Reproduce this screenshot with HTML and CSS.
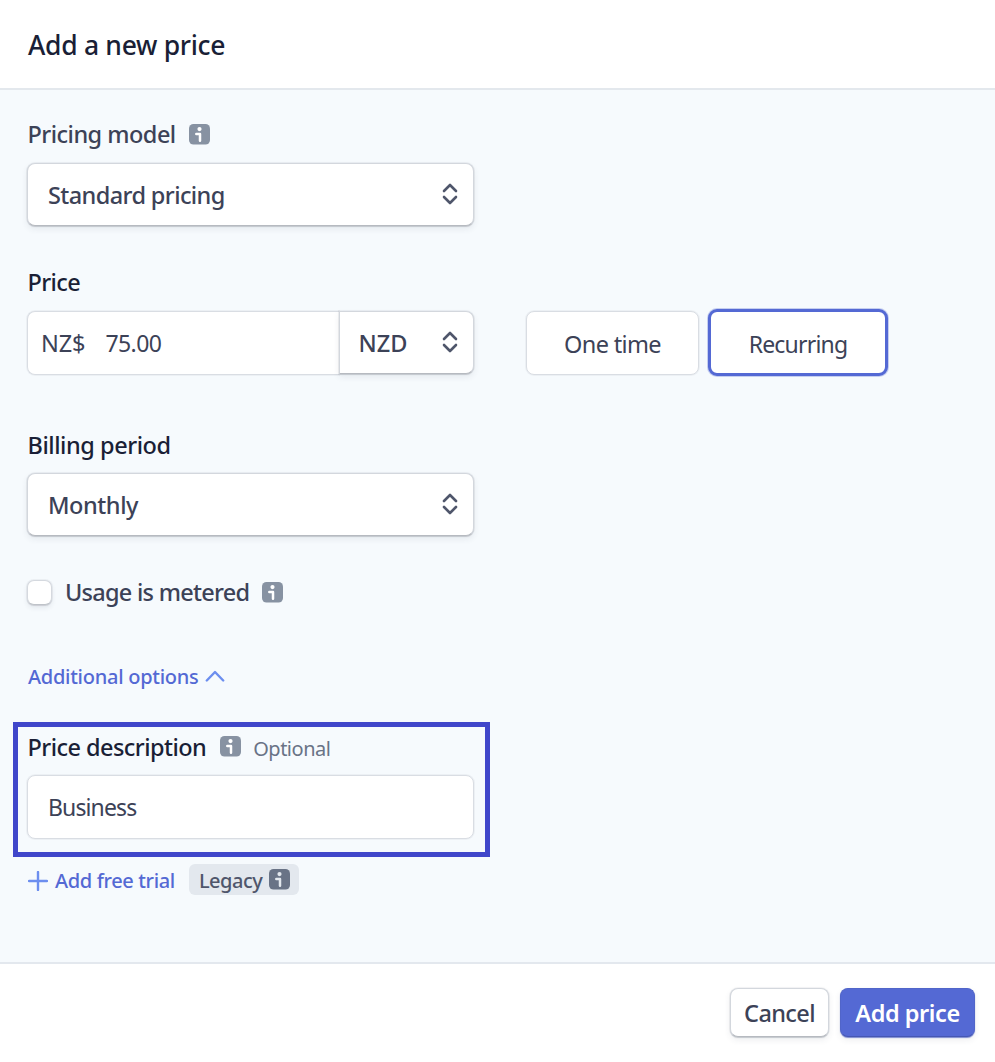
FILE: index.html
```html
<!DOCTYPE html>
<html lang="en">
<head>
<meta charset="utf-8">
<title>Add a new price</title>
<link rel="stylesheet" href="styles.css">
</head>
<body>
<svg width="0" height="0" class="defs" aria-hidden="true">
  <symbol id="info" viewBox="0 0 21 21">
    <rect width="21" height="20.500" rx="4.500" fill="currentColor"/>
    <circle cx="10.500" cy="5.100" r="2.100" fill="var(--mark)"/>
    <path d="M7.300 10h3.700v6.700" fill="none" stroke="var(--mark)" stroke-width="2.500" stroke-linecap="round" stroke-linejoin="round"/>
  </symbol>
  <symbol id="updown" viewBox="0 0 16 22">
    <path d="M2 8l6-6 6 6M2 14l6 6 6-6" fill="none" stroke="currentColor" stroke-width="2.600" stroke-linecap="round" stroke-linejoin="round"/>
  </symbol>
</svg>
<header class="header"><h1 class="title"><span class="t-title">Add a new price</span></h1></header>
<main class="body">
  <div class="label label-soft"><span class="t-model">Pricing model</span><svg class="info"><use href="#info"/></svg></div>
  <div class="select"><span class="t-standard">Standard pricing</span><svg class="updown"><use href="#updown"/></svg></div>

  <div class="label label-price"><span class="t-price">Price</span></div>
  <div class="price-row">
    <div class="amount"><span class="t-prefix">NZ$</span><span class="t-amount">75.00</span></div>
    <div class="select currency"><span class="t-nzd">NZD</span><svg class="updown"><use href="#updown"/></svg></div>
    <div class="choice"><span class="t-once">One time</span></div>
    <div class="choice selected"><span class="t-recurring">Recurring</span></div>
  </div>

  <div class="label label-billing"><span class="t-billing">Billing period</span></div>
  <div class="select monthly"><span class="t-monthly">Monthly</span><svg class="updown"><use href="#updown"/></svg></div>

  <div class="metered"><span class="checkbox"></span><span class="t-usage">Usage is metered</span><svg class="info"><use href="#info"/></svg></div>

  <div class="more"><span class="t-more">Additional options</span><svg class="chevron" viewBox="0 0 20 12"><path d="M1.800 10.500L10 2l8.200 8.500" fill="none" stroke="#6c8eef" stroke-width="2.400" stroke-linecap="round" stroke-linejoin="round"/></svg></div>

  <section class="highlight">
    <div class="label"><span class="t-desc">Price description</span><svg class="info"><use href="#info"/></svg><span class="optional"><span class="t-optional">Optional</span></span></div>
    <div class="input"><span class="t-business">Business</span></div>
  </section>

  <div class="trial">
    <svg class="plus" viewBox="0 0 20 20"><path d="M10 1v18M1 10h18" fill="none" stroke="#6c8eef" stroke-width="2.400" stroke-linecap="round"/></svg>
    <span class="t-trial">Add free trial</span>
    <span class="badge"><span class="t-legacy">Legacy</span><svg class="info"><use href="#info"/></svg></span>
  </div>
</main>
<footer class="footer">
  <div class="btn cancel"><span class="t-cancel">Cancel</span></div>
  <div class="btn primary"><span class="t-add">Add price</span></div>
</footer>
</body>
</html>
```
FILE: styles.css
```css
* { box-sizing: border-box; }
body {
  margin: 0; width: 995px; height: 1062px; overflow: hidden;
  display: flex; flex-direction: column; background: #fff;
  font: 500 23.5px/32px "Noto Sans", "Open Sans", sans-serif; color: #3c4257;
  white-space: nowrap;
}
.defs { position: absolute; }
svg { display: block; flex: none; }
.header { height: 90px; padding: 29px 28px 0; border-bottom: 2px solid #e3e8ed; }
.title { margin: 0; font-size: 26.5px; line-height: 32px; font-weight: 500; color: #1a1f36; }
.body { height: 872px; padding: 28px 27px 0; background: #f6fafd; }
.label { display: flex; align-items: center; height: 32px; padding-left: .5px; margin-bottom: 13px; color: #1a1f36; }
.label-soft { color: #3c4257; }
.label-price { margin-top: 40px; }
.label-billing { margin-top: 54px; margin-bottom: 12px; }
.info { width: 21px; height: 21px; margin-left: 13.5px; color: #8792a2; --mark: #fff; }
.updown { width: 16px; height: 22px; margin-bottom: 2px; color: #4f566b; }
.select {
  display: flex; align-items: center; justify-content: space-between;
  width: 447px; height: 63px; padding: 1px 15px 0 20px; background: #fff;
  border: 1px solid #d3d7dd; border-bottom-color: #b6bac0; border-radius: 8px;
  box-shadow: 0 0 0 1px rgba(60,66,87,.06), 0 1px 1px #cdd1d6, 0 3px 6px rgba(60,66,87,.09);
}
.price-row { display: flex; height: 64px; font-weight: 400; }
.amount, .input, .choice {
  display: flex; align-items: center; background: #fff; height: 64px;
  border: 1px solid #d9dde3; border-radius: 8px; box-shadow: 0 0 0 1px rgba(60,66,87,.05);
}
.amount { width: 312px; padding: 0 0 1px 13px; border-radius: 8px 0 0 8px; border-right: 0; }
.currency { width: 135px; padding-left: 18.5px; border-radius: 0 8px 8px 0; font-weight: 500; }
.choice { width: 173px; margin-left: 52px; justify-content: center; padding-top: 2px; }
.choice.selected { width: 180px; height: 67px; margin: -2px 0 0 9px; border: 3px solid #5469d4; border-radius: 9px; box-shadow: 0 0 0 1px rgba(84,105,212,.3); }
.metered { display: flex; align-items: center; height: 32px; margin-top: 40px; }
.checkbox { width: 25px; height: 25px; margin-right: 13px; border: 1px solid #d5d9df; border-bottom-color: #bfc3c9; border-radius: 7px; background: #fff; box-shadow: 0 0 0 1px rgba(60,66,87,.05), 0 1px 1px #d4d8dd, 0 3px 5px rgba(60,66,87,.09); }
.metered .info { margin-left: 13px; }
.more { display: flex; align-items: center; height: 32px; margin-top: 53px; padding-left: 1px; font-size: 20px; color: #5469d4; }
.chevron { width: 20px; height: 12px; margin: 0 0 2px 7px; }
.highlight { width: 477px; height: 135px; margin: 29px 0 0 -14px; padding: 4px 0 0 9px; border: 5px solid #4046ca; }
.highlight .label { margin-bottom: 12px; }
.highlight .info { margin-bottom: 1px; }
.optional { margin: 3px 0 0 12.5px; font-size: 20px; font-weight: 400; color: #697386; }
.input { width: 447px; padding: 0 0 1px 20px; font-weight: 400; }
.trial { display: flex; align-items: center; height: 31px; margin-top: 7px; padding-left: 1px; font-size: 20px; color: #5469d4; }
.plus { width: 20px; height: 20px; margin: 2px 7px 0 0; }
.badge { display: flex; align-items: center; width: 110px; height: 31px; margin-left: 14px; padding-left: 10px; border-radius: 6px; background: #e3e8ee; color: #4f566b; }
.badge .info { margin-left: 6.5px; margin-bottom: 1px; color: #697386; --mark: #e3e8ee; }
.footer { height: 100px; display: flex; justify-content: flex-end; gap: 11px; padding: 24px 20px 0 0; border-top: 2px solid #e3e8ee; }
.btn { display: flex; align-items: center; justify-content: center; height: 49px; padding-top: 1px; border-radius: 8px; background: #fff; }
.cancel { width: 99px; border: 1px solid #d3d7dd; border-bottom-color: #b6bac0; box-shadow: 0 0 0 1px rgba(60,66,87,.05), 0 1px 1px #cdd1d6, 0 3px 6px rgba(60,66,87,.09); }
.primary { width: 135px; background: #5469d4; color: #fff; font-weight: 600; border: 1px solid #5165c9; border-bottom-color: #4557b3; box-shadow: 0 1px 1px #7d8bd0, 0 3px 6px rgba(60,66,87,.09); }

/* Per-label tracking */
.t-title { letter-spacing: -.3px; }
.t-model { letter-spacing: -.52px; }
.t-standard { letter-spacing: -.6px; }
.t-price { letter-spacing: -.6px; }
.t-prefix { width: 64.5px; letter-spacing: -.2px; }
.t-amount { font-size: 23px; letter-spacing: -.6px; }
.t-once { letter-spacing: -.65px; }
.t-recurring { font-size: 23px; letter-spacing: -.8px; }
.t-billing { letter-spacing: -.45px; }
.t-monthly { letter-spacing: -.45px; }
.t-usage { letter-spacing: -.73px; }
.t-more { letter-spacing: -.27px; }
.t-desc { letter-spacing: -.55px; }
.t-optional { letter-spacing: -.5px; }
.t-business { font-size: 23px; letter-spacing: -.88px; }
.t-trial { margin-top: 2px; letter-spacing: -.35px; }
.t-legacy { margin-top: 2px; letter-spacing: -.5px; }
.t-cancel { letter-spacing: -.6px; }
.t-add { letter-spacing: -.45px; }
```
